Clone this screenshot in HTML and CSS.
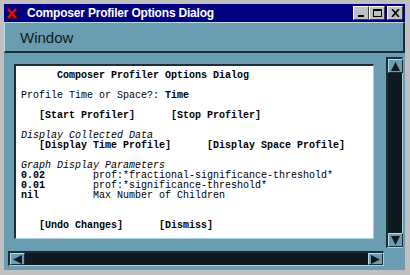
FILE: index.html
```html
<!DOCTYPE html>
<html lang="en">
<head>
  <meta charset="UTF-8">
  <title>Composer Profiler Options Dialog</title>
  <link rel="stylesheet" href="styles.css">
</head>
<body>
  <div class="window">
    <div class="titlebar">
      <svg class="app-icon" width="12" height="12" viewBox="0 0 12 12">
        <path d="M2 2 L10 11 M10 1 L2 11" stroke="#5a0000" stroke-width="3"/>
        <path d="M1 1 L9 10 M9 1 L1 10" stroke="#e01010" stroke-width="2.4"/>
      </svg>
      <span class="title">Composer Profiler Options Dialog</span>
      <div class="controls">
        <button class="ctl"><svg width="9" height="8" viewBox="0 0 9 8"><rect x="1" y="6" width="6" height="2" fill="#000"/></svg></button>
        <button class="ctl"><svg width="9" height="8" viewBox="0 0 9 8"><rect x="0.5" y="0.5" width="8" height="7" fill="none" stroke="#000"/><rect x="0" y="0" width="9" height="2" fill="#000"/></svg></button>
        <button class="ctl close"><svg width="9" height="8" viewBox="0 0 9 8"><path d="M1 0 L8 8 M8 0 L1 8" stroke="#000" stroke-width="1.6"/></svg></button>
      </div>
    </div>

    <div class="menubar">
      <span class="menu-item">Window</span>
    </div>

    <div class="content">
      <div class="pane">
        <pre class="text">      <b>Composer Profiler Options Dialog</b>

Profile Time or Space?: <b>Time</b>

   <b>[Start Profiler]</b>      <b>[Stop Profiler]</b>

<i>Display Collected Data</i>
   <b>[Display Time Profile]</b>      <b>[Display Space Profile]</b>

<i>Graph Display Parameters</i>
<b>0.02</b>        prof:*fractional-significance-threshold*
<b>0.01</b>        prof:*significance-threshold*
<b>nil</b>         Max Number of Children


   <b>[Undo Changes]</b>      <b>[Dismiss]</b></pre>
      </div>

      <div class="vscroll">
        <div class="arrow"><svg width="9" height="9" viewBox="0 0 9 9"><path d="M4.5 0 L9 9 L0 9 Z" fill="#0e1a20"/></svg></div>
        <div class="trough"></div>
        <div class="arrow"><svg width="9" height="9" viewBox="0 0 9 9"><path d="M0 0 L9 0 L4.5 9 Z" fill="#0e1a20"/></svg></div>
      </div>

      <div class="hscroll">
        <div class="arrow"><svg width="9" height="9" viewBox="0 0 9 9"><path d="M0 4.5 L9 0 L9 9 Z" fill="#0e1a20"/></svg></div>
        <div class="trough"></div>
        <div class="arrow"><svg width="9" height="9" viewBox="0 0 9 9"><path d="M0 0 L9 4.5 L0 9 Z" fill="#0e1a20"/></svg></div>
      </div>
    </div>
  </div>
</body>
</html>
```

FILE: styles.css
```css
body {
  margin: 0;
  padding: 0;
  background: #c0c0c0;
}

.window {
  width: 401px;
  height: 266px;
  border-style: solid;
  border-color: #c0c0c0;
  border-width: 4px 5px 5px 4px;
  background: #6a9db2;
  display: flex;
  flex-direction: column;
}

.titlebar {
  height: 18px;
  background: #000080;
  display: flex;
  align-items: center;
  padding: 0 2px 0 2px;
  box-sizing: border-box;
}

.app-icon {
  margin: 1px 8px 0 1px;
}

.title {
  color: #fff;
  font-family: "Liberation Sans", Arial, sans-serif;
  font-weight: bold;
  font-size: 12px;
  letter-spacing: -0.2px;
}

.controls {
  margin-left: auto;
  display: flex;
}

.ctl {
  width: 16px;
  height: 14px;
  padding: 0;
  background: #c0c0c0;
  border: 1px solid;
  border-color: #fff #404040 #404040 #fff;
  display: flex;
  align-items: center;
  justify-content: center;
}

.ctl.close {
  margin-left: 2px;
}

.menubar {
  height: 31px;
  box-sizing: border-box;
  border-top: 1px solid #b8dae6;
  border-left: 1px solid #b8dae6;
  border-right: 2px solid #1c2c34;
  border-bottom: 2px solid #1c2c34;
  display: flex;
  align-items: center;
  padding-left: 15px;
}

.menu-item {
  font-family: "Liberation Sans", Arial, sans-serif;
  font-size: 15px;
  color: #0e1a20;
}

.content {
  flex: 1;
  padding: 4px 2px 4px 4px;
  display: grid;
  grid-template-columns: 376px 17px;
  grid-template-rows: 191px 15px;
  column-gap: 2px;
  row-gap: 3px;
}

.pane {
  padding: 7px 10px 9px 6px;
}

.text {
  margin: 0;
  height: 100%;
  box-sizing: border-box;
  background: #fff;
  border-style: solid;
  border-width: 2px 1px 1px 2px;
  border-color: #1c3038 #a8d0de #a8d0de #1c3038;
  padding: 5px 0 0 5px;
  font-family: "Liberation Mono", "Courier New", monospace;
  font-size: 10px;
  line-height: 10px;
  color: #000;
  overflow: hidden;
}

.vscroll,
.hscroll {
  display: flex;
  border-style: solid;
  border-width: 2px 1px 1px 2px;
  border-color: #1c2c34 #a8d0de #a8d0de #1c2c34;
  background: #0e1a20;
}

.vscroll {
  flex-direction: column;
}

.trough {
  flex: 1;
  background: #0e1a20;
}

.arrow {
  background: #6a9db2;
  display: flex;
  align-items: center;
  justify-content: center;
  width: 13px;
  height: 12px;
  border: 1px solid;
  border-color: #b8dae6 #1c2c34 #1c2c34 #b8dae6;
}

.hscroll .arrow {
  height: 10px;
}
```
